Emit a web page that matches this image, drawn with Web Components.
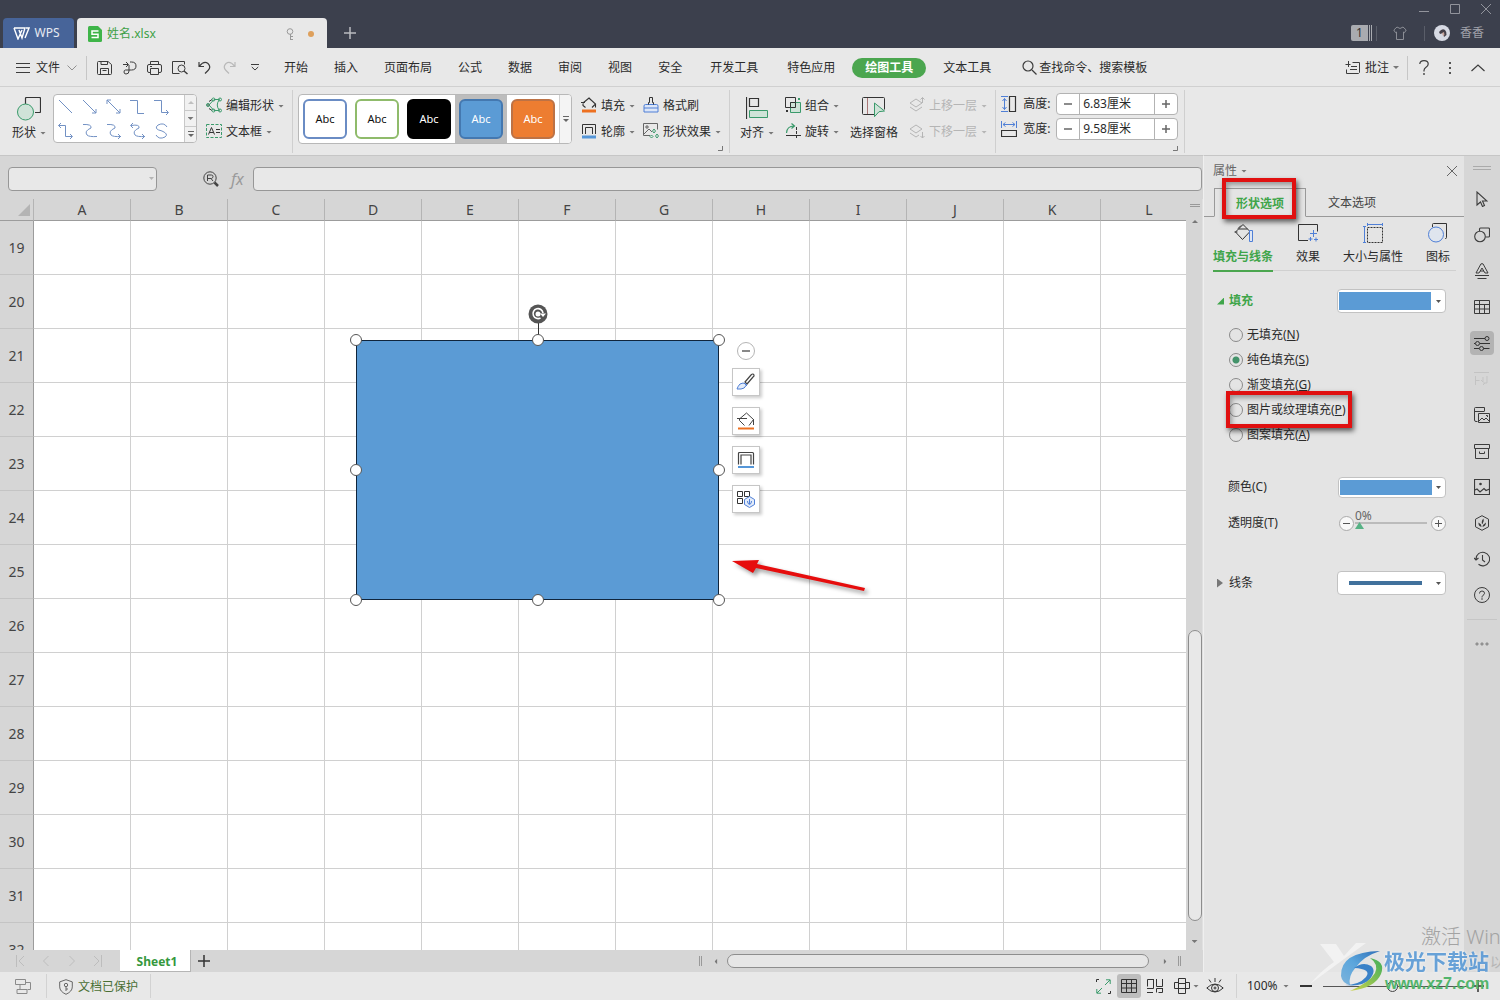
<!DOCTYPE html>
<html lang="zh-CN">
<head>
<meta charset="utf-8">
<title>姓名.xlsx - WPS</title>
<style>
html,body{margin:0;height:100%}
body{font:12px/16px "Noto Sans","Noto Sans CJK SC",sans-serif;color:#2b2b2b;background:#d6d6d6;overflow:hidden}
</style>
</head>
<body>
<wps-app></wps-app>
<script>
const G='#3a9a6b',B='#4f7fd6',K='#3c3c3c';
const ICONS={
 logo:[17,13,`<path d="M1 1h11l-3 10L6 3M1 1l4 11 4-9M12 11l4-10h-3" fill="none" stroke="#fff" stroke-width="1.400"/>`],
 sheet:[14,16,`<path d="M0 1.5Q0 0 1.5 0H10l4 4v10.500q0 1.500-1.500 1.500h-11Q0 16 0 14.500z" fill="#3fb549"/><path d="M10.500 5H4v3.200h6v3.300H3.500" fill="none" stroke="#fff" stroke-width="1.500"/>`],
 pin:[9,13,`<g fill="none" stroke="#999"><circle cx="4" cy="3.500" r="2.800"/><path d="M4.500 6v6M4 8.500h3M4 11.500h3"/></g>`],
 plus:[12,12,`<path d="M6 0v12M0 6h12" stroke="currentColor" stroke-width="1.500"/>`],
 win_min:[10,10,`<path d="M0 7.500h10" stroke="#92949c"/>`],
 win_max:[10,10,`<path d="M.5.5h9v9h-9z" fill="none" stroke="#92949c"/>`],
 close:[10,10,`<path d="M0 0l10 10M10 0L0 10" stroke="currentColor"/>`],
 shirt:[14,14,`<path d="M4 1L.8 4l1.700 2.700L3.500 6v7.500h7V6l1 .7L13.200 4 10 1Q7 4 4 1z" fill="none" stroke="#8b8d95"/>`],
 avatar:[16,16,`<circle cx="8" cy="8" r="8" fill="#d7dae4"/><path d="M5 7q3-4 6-2 2 2 1.500 5l-2.500 2-1-4-3 1z" fill="#45414a"/><path d="M8 8l2-1 .5 3-1.500 1z" fill="#c7a49b"/>`],
 menu:[14,10,`<path d="M0 .5h14M0 4.500h14M0 9.500h14" stroke="${K}"/>`],
 chev:[10,6,`<path d="M.5.5L5 5 9.500.5" fill="none" stroke="#909090"/>`],
 up:[14,8,`<path d="M.5 7L7 1l6.500 6" fill="none" stroke="${K}" stroke-width="1.200"/>`],
 save:[15,14,`<g fill="none" stroke="${K}"><path d="M.5 1.500q0-1 1-1h9.500l3.500 3v9q0 1-1 1h-12q-1 0-1-1z"/><path d="M4 .5v3h6.500V1M3.500 13.500v-6h8v6M5.500 9.500h4"/></g>`],
 pdf:[15,14,`<g fill="none" stroke="${K}"><path d="M1 3.500h5M4 1l2.500 2.500L4 6M8 1h1.500q4.500 0 4.500 4t-4.500 4H3.500q-1.500 0-1.500 2t2 2q3 0 3-3V4"/></g>`],
 print:[15,14,`<g fill="none" stroke="${K}"><path d="M3.500 3.500v-3h8v3M3.500 11.500H2q-1.500 0-1.500-1.500V5q0-1.500 1.500-1.500h11q1.500 0 1.500 1.500v5q0 1.500-1.500 1.500h-1.500M3.500 7.500h8v6h-8zM3 5.500h2"/></g>`],
 preview:[16,14,`<g fill="none" stroke="${K}"><path d="M12.500 3.500v-3H.5v12h7"/><circle cx="9.500" cy="7.500" r="3.500"/><path d="M12 10l3.500 3" stroke-width="1.500"/></g>`],
 undo:[13,13,`<path d="M1 1v4.500h5M1.500 5Q6-.5 10 2.500q3.500 3.500 0 7L7 12.500" fill="none" stroke="${K}" stroke-width="1.200"/>`],
 redo:[13,13,`<path d="M12 1v4.500H7M11.500 5Q7-.5 3 2.500q-3.500 3.500 0 7L6 12.500" fill="none" stroke="#b9b9b9" stroke-width="1.200"/>`],
 more:[8,7,`<path d="M0 .5h8M.8 3L4 6l3.200-3" fill="none" stroke="${K}"/>`],
 more2:[6,7,`<path d="M0 .5h6" stroke="#666"/><path d="M0 3h6L3 6z" fill="#666"/>`],
 search:[15,15,`<g fill="none" stroke="${K}" stroke-width="1.200"><circle cx="6" cy="6" r="5"/><path d="M10 10l4.500 4.500"/></g>`],
 note:[16,14,`<g fill="none" stroke="${K}"><path d="M3.500 0v6M.5 3.500h5M7.500 1.500h7v10l-1 1h-12v-4M5 8.500h7M6 5.500h6"/></g>`],
 help:[10,15,`<path d="M.8 4Q1 .6 5 .6 9.200.6 9.200 4q0 2-2.200 3.200-2 1.300-2 3.300v1" fill="none" stroke="${K}" stroke-width="1.200"/><circle cx="5" cy="14" r=".9" fill="${K}"/>`],
 dots:[2,12,`<path d="M0 0h2v2H0zM0 5h2v2H0zM0 10h2v2H0z" fill="#555"/>`],
 shapes:[24,24,`<path d="M8.500 7V1.500q0-1 1-1h13q1 0 1 1v13q0 1-1 1H18" fill="none" stroke="#333" stroke-width="1.200"/><circle cx="8.500" cy="15" r="8" fill="#cfe3d8" stroke="${G}"/>`],
 editshape:[16,16,`<g fill="none" stroke="${G}"><path d="M3 8L8 2.500h5.500Q9 8 13.500 13.500H8L3 8"/><path d="M1 8h3M3 4.500l3-2M3 11.500l3 2" stroke="#333"/><circle cx="2" cy="8" r="1.500"/><circle cx="7.500" cy="2.500" r="1.500"/><circle cx="14" cy="2.500" r="1.500"/><circle cx="7.500" cy="13.500" r="1.500"/><circle cx="14" cy="13.500" r="1.500"/></g>`],
 textbox:[16,14,`<path d="M.5.500h15v13h-15z" fill="none" stroke="${G}" stroke-dasharray="3 1.500"/><path d="M2.500 10.500l3-7 3 7M3.500 8.500h4M10 5.500h4M10 8.500h4" fill="none" stroke="#333"/>`],
 bucket:[16,16,`<path d="M0 5.500h4M2 6l6-5 6.500 6L11 10.500M2 6.500v2l2.500 2M14.500 6.500v4M8 1l2 2" fill="none" stroke="#333" stroke-width="1.100"/><path d="M1 12.500h14v3H1z" fill="#ed7020"/>`],
 outline:[16,16,`<path d="M1.500 11V1.500h13V11M4.500 11V4.500h7V11" fill="none" stroke="#333"/><path d="M1 12.500h14v3H1z" fill="#5596d8"/>`],
 brush:[16,16,`<path d="M1 15V9q0-1.500 1.500-1.500h11Q15 7.500 15 9v6z" fill="#dce6f7" stroke="${B}"/><path d="M1 11h14" stroke="${B}"/><path d="M5.500 7.500v-2h1v-5h3v5h1v2" fill="none" stroke="#333"/>`],
 effect:[16,16,`<path d="M7 12.500H.5V.5h14v6M1 11l5-5 3 3" fill="none" stroke="#666"/><path d="M3 3h2v2H3z" fill="none" stroke="#666"/><path d="M11 6l1.500 2L11 10 9.500 8zM14 11l1.500 2-1.500 2-1.500-2zM8.500 12l1.500 1.500L8.500 15 7 13.500z" fill="none" stroke="${G}"/>`],
 align:[22,22,`<path d="M.5 0v22M3.500 1.500h9v8h-9z" fill="none" stroke="#333" stroke-width="1.200"/><path d="M3.500 13.500h18v7h-18z" fill="#cfe3d8" stroke="${G}"/>`],
 group:[16,16,`<g fill="none"><path d="M.5.5h10v10H.5z" stroke="#333"/><path d="M5.500 5.500h10v10h-10z" fill="#cfe3d8" stroke="${G}"/><path d="M5.500 5.500h5v5h-5z" stroke="#333"/><path d="M13 1h2v2h-2z" fill="${G}"/><path d="M1 13h2v2H1z" fill="#333"/></g>`],
 rotate:[16,16,`<path d="M1.500 10Q2 3 9 3M6.500.5L9.500 3 6.500 5.500" fill="none" stroke="${G}" stroke-width="1.200"/><path d="M1 12.500h15" stroke="#333"/><path d="M11.500 4v12" stroke="#333" stroke-dasharray="3 1"/>`],
 pane:[24,21,`<path d="M12 17.500H1.500q-1 0-1-1v-15q0-1 1-1h20q1 0 1 1v11" fill="none" stroke="#333"/><path d="M5.500 1v16" stroke="#a77"/><path d="M12.500 6l10 8-5.500.7-4.500 5z" fill="#cfe3d8" stroke="${G}"/>`],
 layerup:[16,16,`<path d="M7 2L1 6l6 4 6-4zM1 10l6 4 6-4M13.500 6V.5M11.500 2.500l2-2 2 2" fill="none" stroke="#b5b5b5"/>`],
 layerdn:[16,16,`<path d="M7 2L1 6l6 4 6-4zM1 10l6 4 3-2M13.500 9v6M11.500 13l2 2 2-2" fill="none" stroke="#b5b5b5"/>`],
 height:[16,16,`<path d="M8.500.5h6v15h-6z" fill="none" stroke="#333" stroke-width="1.200"/><path d="M0 .5h7M0 15.500h7M3.500 2.500v11M1.500 5l2-2.500 2 2.500M1.500 11l2 2.500 2-2.500" fill="none" stroke="${B}"/>`],
 width:[16,16,`<path d="M.5 9.500h15v6H.5z" fill="none" stroke="#333" stroke-width="1.200"/><path d="M.5 0v7M15.500 0v7M2 3.500h12M4.500 1.500l-2.500 2 2.500 2M11.500 1.500l2.500 2-2.500 2" fill="none" stroke="${B}"/>`],
 launcher:[5,5,`<path d="M4.500 0v4.500H0" fill="none" stroke="#777"/>`],
 zoomr:[16,16,`<g fill="none" stroke="#444"><circle cx="7" cy="7" r="6.200"/><path d="M4.500 10V4h4q1.500 0 1.500 1.500T8.500 7.500h-4M8 7.500l2 2.500"/><path d="M11.500 11.500l3.500 3.500" stroke-width="2.500"/></g>`],
 corner:[12,12,`<path d="M12 0v12H0z" fill="#b4b4b4"/>`],
 p_fill:[20,20,`<path d="M1.500 9h3M2.500 9L10 1.500l7 7-7.500 8L2.500 9M5.500 6l9 0M8 2.500L5 5.500" fill="none" stroke="#333"/><path d="M16.500 7.500h3v11h-3z" fill="#dfe6f3" stroke="${B}"/>`],
 p_fx:[20,20,`<path d="M10 17.500H.5v-16h19v7" fill="none" stroke="#333"/><path d="M15.500 7v7M12 10.500h7M12.500 14v4M10.500 16h4M18 14.500v4M16 16.500h4" stroke="${B}"/>`],
 p_size:[20,20,`<path d="M4.500 4.500h15v15h-15z" fill="none" stroke="#333" stroke-dasharray="2 1"/><path d="M1.500 4v15.500M0 3.500h3M0 19.500h3M4 1.500h15.500M4.500 0v3M19.500 0v3" stroke="${B}"/>`],
 p_icon:[20,20,`<path d="M4.500 4V1.500q0-1 1-1h13v14q0 1-1 1H17" fill="none" stroke="#333"/><circle cx="8" cy="11.500" r="7.500" fill="#dfe5ee" stroke="${B}"/>`],
 s_grip:[18,4,`<path d="M0 .5h18M0 3.500h18" stroke="#aaa"/>`],
 s_cursor:[12,16,`<path d="M1 1v13l3.500-3 2 4.500 2-1L6.500 10H11z" fill="none" stroke="${K}" stroke-width="1.100"/>`],
 s_shape:[16,16,`<g fill="none" stroke="${K}" stroke-width="1.100"><circle cx="6" cy="9.500" r="5.300"/><path d="M5.500 4V2q0-1 1-1h8q1 0 1 1v7q0 1-1 1h-3"/></g>`],
 s_art:[16,16,`<g fill="none" stroke="${K}"><path d="M2 10L7 .8h2L14 10h-3l-3-5-3 5zM6 8h4M1 12.500h14M3.500 15.500h9"/></g>`],
 s_table:[16,14,`<path d="M.5.5h15v13H.5zM.5 4.500h15M.5 9h15M5.500.5v13M10.500 4.500v9" fill="none" stroke="${K}"/>`],
 s_prop:[16,15,`<g fill="none" stroke="#333"><path d="M0 2.500h11M0 7.500h1M6 7.500h10M0 12.500h5M9.500 12.500h6"/><circle cx="13" cy="2.500" r="2"/><circle cx="3.500" cy="7.500" r="2"/><circle cx="7.500" cy="12.500" r="2"/></g>`],
 s_off:[16,16,`<path d="M0 1.500h15M1.500 5v9M1.500 9.500h4M7 9l2 2V6M9 14l2-2M13 5v7h-4" fill="none" stroke="#c3c3c3"/>`],
 s_pics:[16,16,`<path d="M3.500 14.500H2q-1.500 0-1.500-1.500V1.500q0-1 1-1h9v3.500M.5 4.500h10M4.500 6.500h11v9h-11zM5 14l3-3 2 2 2-2 3 3M12 8.500h1.500V10" fill="none" stroke="${K}"/>`],
 s_box:[16,15,`<path d="M.5.5h15v4H.5zM1.500 4.500v10h13v-10M5.500 7.500v2h5v-2" fill="none" stroke="${K}"/>`],
 s_img:[16,16,`<path d="M.5.5h15v15H.5zM1 11l2-1 3 3 4-3.500 2 2 3.500-1.500" fill="none" stroke="${K}" stroke-width="1.200"/><circle cx="6.500" cy="5" r="1.300" fill="${K}"/>`],
 s_hex:[16,16,`<path d="M8 .7l6.500 3.500v7.600L8 15.300 1.500 11.800V4.200z" fill="none" stroke="${K}"/><path d="M7.500 12Q4 11 4.500 7.500l2.500 2zM8 9Q7 6 9.500 3.500 10.500 6 8.500 9zM8.500 12l.5-2 3-2.500Q12 11 8.500 12z" fill="${K}"/>`],
 s_hist:[16,16,`<path d="M2 8a6.800 6.800 0 1 1 2.500 5.300M0 7l2 2 2.500-2M8.500 4v5l2.500 2" fill="none" stroke="${K}" stroke-width="1.100"/>`],
 s_help:[16,16,`<circle cx="8" cy="8" r="7.500" fill="none" stroke="${K}"/><path d="M5.500 6.500Q5.500 4 8 4t2.500 2.300Q10.500 7.500 9 8.300 8 9 8 10.500" fill="none" stroke="${K}"/><circle cx="8" cy="12" r=".8" fill="${K}"/>`],
 s_more:[14,4,`<g fill="none" stroke="#777"><circle cx="2" cy="2" r="1.100"/><circle cx="7" cy="2" r="1.100"/><circle cx="12" cy="2" r="1.100"/></g>`],
 rot:[20,20,`<circle cx="10" cy="10" r="9.500" fill="#555"/><path d="M12.500 14a5 5 0 1 1 2.500-5" fill="none" stroke="#fff" stroke-width="1.600"/><circle cx="10" cy="10" r="2.500" fill="#fff"/><path d="M12 9.500h6l-3 3.500z" fill="#fff"/>`],
 f_brush:[20,18,`<path d="M9 9l6-7q2-2 3 0 .5 1-1 2l-6 7z" fill="none" stroke="#444" stroke-width="1.200"/><path d="M1 16q1-3 3-5 3-2 6 0l.5 1q-2 4-5.500 4zM8 10l3 3" fill="#e3ecfa" stroke="${B}"/>`],
 f_bucket:[18,18,`<path d="M0 6.500h10M3 6.500L9.500 1l7 6.500-4.500 6M2.500 6.500v2l5 5M16.500 7v6" fill="none" stroke="#444"/><path d="M1 15.500h16v2H1z" fill="#ed7020"/>`],
 f_outline:[18,18,`<path d="M1.500 13.500V2.500q0-1 1-1h13q1 0 1 1v11M4 13.500V4h10v9.500" fill="none" stroke="#444" stroke-width="1.200"/><path d="M1 15h16v2H1z" fill="#5596d8"/>`],
 f_grid:[18,18,`<path d="M.5 1.500h5v5h-5zM7.500 1.500h5v5h-5zM.5 8.500h5v5h-5z" fill="none" stroke="#333"/><path d="M12.500 6.500l5 3v5l-5 3-5-3v-5z" fill="#e3ecfa" stroke="${B}"/><path d="M12.500 9v5M10.500 11q0 3 2 3.500 2-.5 2-3.500" fill="none" stroke="${B}"/>`],
 first:[8,12,`<path d="M.5 0v12M8 1L3 6l5 5" fill="none" stroke="#bdbdbd"/>`],
 prev:[6,12,`<path d="M5.500 1l-5 5 5 5" fill="none" stroke="#bdbdbd"/>`],
 next:[6,12,`<path d="M.5 1l5 5-5 5" fill="none" stroke="#bdbdbd"/>`],
 last:[8,12,`<path d="M7.500 0v12M0 1l5 5-5 5" fill="none" stroke="#bdbdbd"/>`],
 b_track:[16,15,`<path d="M.5.5h10v5H.5zM10.500 3.500h5v7h-3M5 5.500v5M2 10.500h10v4H2z" fill="none" stroke="#8a8a8a"/>`],
 shield:[14,16,`<path d="M7 .7l6.300 2.200v5q0 4.500-6.300 7.400Q.7 12.400.7 7.900v-5z" fill="none" stroke="#666"/><circle cx="7" cy="6" r="1.700" fill="none" stroke="#666"/><path d="M7 8v4M7 10h2" stroke="#666"/>`],
 v_full:[15,15,`<path d="M.5 3V.5H3M14.500 12v2.500H12" fill="none" stroke="#333"/><path d="M9 6l5-5M10 .8h4.200V5M6 9l-5 5M.8 10v4.200H5" fill="none" stroke="${G}"/>`],
 v_grid:[16,14,`<path d="M.5.500h15v13H.5zM.5 4.500h15M.5 9h15M5.500.5v13M10.500.5v13" fill="none" stroke="#333"/>`],
 v_page:[16,14,`<path d="M6 .5H.5v7M9.500 0v7.500H15.500V0M0 9.500h6.500V0M9.500 13.500v-4h7M0 13.500h6M15.500 9.500v4h-4" fill="none" stroke="#333"/>`],
 v_read:[16,16,`<path d="M4.500.5h7v15h-7zM4.500 4.500H.5v6h4M11.500 4.500h4v6h-4M4.500 5.500h7M4.500 10.500h7" fill="none" stroke="#333"/>`],
 eye:[18,16,`<g fill="none" stroke="#333"><path d="M.8 10Q9 2 17.200 10 9 18 .8 10z"/><circle cx="9" cy="10" r="3.500"/><circle cx="9" cy="10" r="1"/><path d="M9 0v4M3 1.500l2 3M15 1.500l-2 3"/></g>`],
 vgrip:[3,10,`<path d="M.5 0v10M2.500 0v10" stroke="#999"/>`],
 hgrip:[10,3,`<path d="M0 .5h10M0 2.500h10" stroke="#999"/>`],
 swirl:[176,58,`<defs><linearGradient id="a" x1="1" y1="0" x2="0" y2="1"><stop offset="0" stop-color="#2f6fb8"/><stop offset=".5" stop-color="#5aa5dc"/><stop offset="1" stop-color="#7db4dc"/></linearGradient><linearGradient id="b" x1="1" y1="0" x2="0" y2="1"><stop offset="0" stop-color="#3fae5c"/><stop offset="1" stop-color="#cfd34a"/></linearGradient></defs><path d="M10 2h16l8 12L46 1h10Q30 20 0 42 12 28 24 20z" fill="#f4f4f4" opacity=".85"/><path d="M70 9Q30 10 31 34q1 7 9 9-2-9 6-18 8-11 24-16z" fill="url(#a)"/><path d="M44 26q9-7 17-2 6 5-2 14-7 7-24 5 14 0 21-8 6-8-12-9z" fill="#3b82c8"/><path d="M60 16q16 3 11 16-6 14-31 17 20-9 25-18 4-9-5-15z" fill="url(#b)"/>`]
};

class Base extends HTMLElement{
  constructor(){super();this.attachShadow({mode:'open'});}
  connectedCallback(){
    this.shadowRoot.innerHTML=`<style>:host{display:block;box-sizing:border-box}*{box-sizing:border-box}
    button{font:inherit;color:inherit;background:none;border:0;padding:0;margin:0;display:flex;align-items:center;justify-content:center;white-space:nowrap}
    input,select{font:inherit;color:inherit;margin:0;min-width:0;outline:0}
    ${this.css()}</style>${this.html()}`;
  }
  css(){return''} html(){return''}
}
const define=(n,css,html)=>customElements.define(n,class extends Base{
  css(){return css} html(){return typeof html==='function'?html(this):html}
});
const ic=n=>`<ui-icon name="${n}"></ui-icon>`;

define('ui-icon',`:host{display:block;flex:none}svg{display:block}`,el=>{
  const [w,h,b]=ICONS[el.getAttribute('name')];
  return `<svg width="${w}" height="${h}" viewBox="0 0 ${w} ${h}" aria-hidden="true">${b}</svg>`;
});
define('ui-caret',`:host{width:6px;height:3px;background:#777;clip-path:polygon(0 0,100% 0,50% 100%);flex:none}`,'');

define('tool-button',`
 button{gap:4px;height:16px}
 :host([tall]) button{flex-direction:column;height:44px;justify-content:space-between}
 .label{display:flex;align-items:center;gap:4px;padding-top:2px}
 :host([tall]) .label{padding-top:0}
 :host([off]){color:#b5b5b5}
 :host([off]) ui-caret{background:#b5b5b5}`,el=>{
  const c=el.hasAttribute('caret')?'<ui-caret></ui-caret>':'';
  return `<button ${el.hasAttribute('off')?'disabled style="color:inherit"':''}>${ic(el.getAttribute('icon'))}<span class="label"><slot></slot>${c}</span></button>`;
});

define('num-stepper',`
 :host{display:flex;align-items:center;gap:6px;height:22px}
 label{width:27px;white-space:nowrap}
 .box{display:flex;width:122px;height:22px;border:1px solid #b3b3b3;border-radius:4px;background:#fff;overflow:hidden}
 button{width:22px}
 button svg{display:block}
 input{flex:1;border:0;border-left:1px solid #b3b3b3;border-right:1px solid #b3b3b3;padding:0 3px;background:#fff}`,
 el=>`${ic(el.getAttribute('icon'))}<label for="v">${el.getAttribute('label')}</label><div class="box"><button aria-label="减小"><svg width="8" height="8"><path d="M0 4h8" stroke="#666" stroke-width="1.500"/></svg></button><input id="v" value="${el.getAttribute('value')}"><button aria-label="增大"><svg width="8" height="8"><path d="M0 4h8M4 0v8" stroke="#666" stroke-width="1.500"/></svg></button></div>`);

define('title-bar',`
 :host{display:flex;height:48px;background:#3c404d;color:#fff;padding-left:3px;align-items:flex-end;justify-content:space-between}
 .tabs{display:flex;gap:3px;align-items:flex-end}
 .home{width:71px;height:30px;background:#476499;border-radius:4px 4px 0 0;gap:4px;color:#e8ebf2;padding-right:4px}
 .doc{width:250px;height:30px;background:#e8e8e8;border-radius:4px 4px 0 0;color:#3ea046;gap:5px;padding:2px 13px 0 11px}
 .doc span{flex:1;text-align:left}.dot{width:6px;height:6px;border-radius:3px;background:#dea05c;margin-left:8px}
 .add{width:40px;height:30px;color:#b9bbc0}
 .right{display:flex;flex-direction:column;height:48px;padding:4px 9px 0 0;align-items:flex-end;gap:10px}
 .win{display:flex;gap:21px;color:#92949c}
 .user{display:flex;align-items:center;height:18px;color:#a0a2aa;padding-right:7px}
 .num{width:25px;height:16px;background:linear-gradient(90deg,#a9abb0 17px,#3c404d 17px 18px,#a9abb0 18px 19px,#3c404d 19px 20px,#a9abb0 20px 21px,#3c404d 21px);color:#333;justify-content:flex-start;padding-left:5px;border-radius:2px}
 i{width:1px;height:15px;background:#5a5e69}
 .shirt{width:47px}.me{gap:10px;margin-left:9px}`,
 `<div class="tabs"><button class="home">${ic('logo')}WPS</button><button class="doc">${ic('sheet')}<span>姓名.xlsx</span>${ic('pin')}<b class="dot"></b></button><button class="add" aria-label="新建">${ic('plus')}</button></div>
 <div class="right"><div class="win"><button aria-label="最小化">${ic('win_min')}</button><button aria-label="最大化">${ic('win_max')}</button><button aria-label="关闭">${ic('close')}</button></div>
 <div class="user"><button class="num">1</button><i></i><button class="shirt" aria-label="皮肤">${ic('shirt')}</button><i></i><button class="me">${ic('avatar')}香香</button></div></div>`);

define('menu-bar',`
 :host{display:flex;align-items:center;height:39px;background:#e8e8e8;border-bottom:1px solid #d0d0d0;padding:1px 15px 0 16px}
 .file{gap:6px}.file ui-icon:last-child{margin-left:1px}
 i{width:1px;height:24px;background:#c6c6c6;flex:none}
 .file+i{margin:0 5px 0 9px}
 .quick{display:flex}.quick button{width:25px;height:24px}
 nav{display:flex}.main{gap:26px;margin:0 15px 0 17px}
 .main button{padding-top:1px}
 .tools{gap:3px}.tools button{padding:1px 13px 0;height:20px}
 .tools .on{background:#4ba64f;color:#fff;font-weight:700;border-radius:10px;margin:0 1px}
 .search{margin-left:18px;gap:2px}
 .end{margin-left:auto;display:flex;align-items:center;gap:20px}
 .note{gap:4px}.end i{margin:0 -9px 0 -12px}`,
 `<button class="file">${ic('menu')}文件${ic('chev')}</button><i></i>
 <div class="quick">${['save','pdf','print','preview','undo','redo','more'].map(n=>`<button aria-label="${n}">${ic(n)}</button>`).join('')}</div>
 <nav class="main">${['开始','插入','页面布局','公式','数据','审阅','视图','安全'].map(t=>`<button>${t}</button>`).join('')}</nav>
 <nav class="tools"><button>开发工具</button><button>特色应用</button><button class="on">绘图工具</button><button>文本工具</button></nav>
 <button class="search">${ic('search')}查找命令、搜索模板</button>
 <div class="end"><button class="note">${ic('note')}批注<ui-caret></ui-caret></button><i></i><button aria-label="帮助">${ic('help')}</button><button aria-label="更多">${ic('dots')}</button><button aria-label="收起">${ic('up')}</button></div>`);

define('line-gallery',`
 :host{display:flex;width:144px;height:49px;border:1px solid #b8b8b8;border-radius:4px;background:#fff;overflow:hidden}
 .cells{flex:1;display:grid;grid-template-columns:repeat(5,24px);grid-auto-rows:24px}
 svg{display:block}
 .arrows{width:12px;display:flex;flex-direction:column;background:#f1f1f1;border-left:1px solid #c8c8c8}
 .arrows button{flex:1;border-bottom:1px solid #c8c8c8}.arrows button:last-child{border:0}
 .u{transform:rotate(180deg);opacity:.4}`,
 ()=>{
  const p=['M1 1l13 13','M1 1l13 13M14 10v4h-4','M1 1l13 13M14 10v4h-4M1 5V1h4','M0 1.500h7.500v13H14','M0 1.500h7.500v12H14M12 11l2.500 2.500L12 16',
  'M3 0L.5 2.500 3 5M.5 2.500h7v11H14M12 11l2.500 2.500L12 16','M1 1.500Q10 1 9 5 2 8 5 12q2 2 10 1.500','M1 1.500Q10 1 9 5 2 8 5 12q2 2 10 1.500M12 11l2.500 2.500L12 16','M1 2.500Q10 1 9 5 2 8 5 12q2 2 10 1.500M12 11l2.500 2.500L12 16M3 0L.5 2.500 3 5','M13 4Q10-1 4 2-1 6 8 8q7 3 3 6-6 3-9-2'];
  return `<div class="cells">${p.map((d,i)=>`<button aria-label="线条 ${i+1}"><svg width="16" height="17"><path d="${d}" fill="none" stroke="#7291c4"/></svg></button>`).join('')}</div><div class="arrows"><button aria-label="上"><ui-caret class="u"></ui-caret></button><button aria-label="下"><ui-caret></ui-caret></button><button aria-label="展开">${ic('more2')}</button></div>`});

define('style-gallery',`
 :host{display:flex;width:274px;height:50px;border:1px solid #b8b8b8;border-radius:4px;background:#fff;overflow:hidden;font-size:11px}
 .cell{width:52px;display:flex;align-items:center;justify-content:center}
 .cell.on{background:#bdbdbd}
 .cell button{width:44px;height:40px;border-radius:6px;border:2px solid #6a8cc4;color:#111}
 .cell .g{border-color:#8fbb6b}.cell .k{background:#000;border-color:#000;color:#fff}
 .cell .b{background:#5b9bd5;border-color:#4478b0;color:#fff}.cell .o{background:#ed7d31;border-color:#bd7245;color:#fff}
 .more{flex:1;background:#f4f4f4;border-left:1px solid #d0d0d0}`,
 `${['w','g','k','b','o'].map(c=>`<div class="cell ${c=='b'?'on':''}"><button class="${c}">Abc</button></div>`).join('')}<button class="more" aria-label="更多样式">${ic('more2')}</button>`);

define('ribbon-bar',`
 :host{display:flex;height:68px;background:#e8e8e8}
 .g{display:flex;align-items:flex-start;padding:7px 8px 0;margin:3px 0 2px;border-right:1px solid #cfcfcf;position:relative}
 line-gallery,style-gallery{margin-top:-3px}
 .col{display:flex;flex-direction:column;gap:10px;align-items:flex-start}
 .g1{padding-left:12px}.g1 line-gallery{margin-left:7px}.g1 .col{margin-left:9px}
 .g2{padding-left:5px}.g2 .col{margin-left:9px}.g2 .col+.col{margin-left:8px}
 .g3{padding-left:10px;gap:11px}
 .g4{padding:3px 6px 0 5px}.g4 .col{gap:3px}
 .l{position:absolute;right:6px;bottom:2px}`,
 `<div class="g g1"><tool-button tall caret icon="shapes">形状</tool-button><line-gallery></line-gallery><div class="col"><tool-button caret icon="editshape">编辑形状</tool-button><tool-button caret icon="textbox">文本框</tool-button></div></div>
 <div class="g g2"><style-gallery></style-gallery><div class="col"><tool-button caret icon="bucket">填充</tool-button><tool-button caret icon="outline">轮廓</tool-button></div><div class="col"><tool-button icon="brush">格式刷</tool-button><tool-button caret icon="effect">形状效果</tool-button></div><ui-icon class="l" name="launcher"></ui-icon></div>
 <div class="g g3"><tool-button tall caret icon="align">对齐</tool-button><div class="col"><tool-button caret icon="group">组合</tool-button><tool-button caret icon="rotate">旋转</tool-button></div><tool-button tall icon="pane">选择窗格</tool-button><div class="col"><tool-button off caret icon="layerup">上移一层</tool-button><tool-button off caret icon="layerdn">下移一层</tool-button></div></div>
 <div class="g g4"><div class="col"><num-stepper icon="height" label="高度:" value="6.83厘米"></num-stepper><num-stepper icon="width" label="宽度:" value="9.58厘米"></num-stepper></div><ui-icon class="l" name="launcher"></ui-icon></div>`);

define('formula-bar',`
 :host{display:flex;align-items:center;height:44px;padding:2px 1px 0 8px;border-top:1px solid #c6c6c6}
 .name{display:flex;align-items:center;width:149px;height:24px;border:1px solid #979797;border-radius:4px;background:#e8e8e8;padding-right:2px;margin-right:46px}
 .name input{flex:1;border:0;background:none}.name ui-caret{width:5px;background:#b5b5b5}
 .fx{font:italic 16px/20px "Noto Sans",sans-serif;color:#9a9a9a;margin:0 9px 0 12px}
 .f{flex:1;height:24px;border:1px solid #979797;border-radius:4px;background:#e8e8e8}`,
 `<div class="name"><input aria-label="名称框"><ui-caret></ui-caret></div><button aria-label="浏览公式">${ic('zoomr')}</button><button class="fx">fx</button><input class="f" aria-label="编辑栏">`);

define('shape-object',`
 :host{position:absolute;width:363px;height:260px;background:#5b9bd5;box-shadow:inset 0 0 0 1px #10253c}
 .h{position:absolute;width:12px;height:12px;border:1px solid #555;border-radius:6px;background:#fff;transform:translate(-50%,-50%)}
 .stem{position:absolute;left:50%;top:-18px;width:1px;height:18px;background:#333}
 .rot{position:absolute;left:50%;top:-36px;margin-left:-10px}`,
 `<span class="stem"></span><ui-icon class="rot" name="rot"></ui-icon>${[[0,0],[50,0],[100,0],[0,50],[100,50],[0,100],[50,100],[100,100]].map(([x,y])=>`<span class="h" style="left:${x}%;top:${y}%"></span>`).join('')}`);

define('float-tools',`
 :host{position:absolute;display:flex;flex-direction:column;align-items:center;gap:11px}
 button{width:28px;height:28px;border:1px solid #c6c6c6;background:#fff;box-shadow:2px 2px 3px #0003}
 .min{width:18px;height:18px;border-radius:9px;box-shadow:none;margin-bottom:-3px;border-color:#b5b5b5}
 .min::before{content:"";width:8px;height:2px;background:#888}`,
 `<button class="min" aria-label="收起"></button>${['f_brush','f_bucket','f_outline','f_grid'].map(n=>`<button aria-label="${n}">${ic(n)}</button>`).join('')}`);

define('sheet-grid',`
 :host{position:relative;flex:1;min-width:0;min-height:0;overflow:hidden;background:#fff;color:#444;font-size:14px}
 table{border-collapse:separate;border-spacing:0;table-layout:fixed;width:1198px}
 th{font-weight:400;padding:0;background:#d6d6d6}
 thead th{height:22px;border-bottom:1px solid #9c9c9c;border-right:1px solid #b4b4b4;width:97px}
 thead th:first-child{width:34px}
 thead ui-icon{margin-left:18px}
 tbody th{border-right:1px solid #9c9c9c;border-bottom:1px solid #c4c4c4}
 tbody tr{height:54px}
 td{padding:0;border-right:1px solid #d0d0d0;border-bottom:1px solid #d0d0d0}
 shape-object{left:356px;top:141px}
 float-tools{left:732px;top:143px}
 .arrow{position:absolute;left:728px;top:352px;filter:drop-shadow(3px 3px 2px #0006)}`,
 ()=>{
  const cols=[...'ABCDEFGHIJKL'];
  let rows='';for(let r=19;r<=32;r++)rows+=`<tr><th scope="row">${r}</th>${'<td></td>'.repeat(cols.length)}</tr>`;
  return `<table><thead><tr><th>${ic('corner')}</th>${cols.map(c=>`<th scope="col">${c}</th>`).join('')}</tr></thead><tbody>${rows}</tbody></table>
  <shape-object></shape-object><float-tools></float-tools>
  <svg class="arrow" width="145" height="50"><path d="M4 10l27-1-2 4 108 24-1 3L28 17l-3 5z" fill="#e60d0d"/></svg>`});

define('v-scroll',`
 :host{width:17px;display:flex;flex-direction:column;align-items:center;padding:5px 1px 7px 2px;border-right:1px solid #e0e0e0}
 .up{margin-top:13px;transform:rotate(180deg)}
 .track{flex:1;align-self:stretch;display:flex;flex-direction:column;padding:4px 0 19px;justify-content:flex-end}
 .thumb{height:42%;border:1px solid #8d8d8d;border-radius:7px;background:#e8e8e8;width:14px}`,
 `${ic('hgrip')}<ui-caret class="up"></ui-caret><div class="track"><div class="thumb"></div></div><ui-caret></ui-caret>`);

define('sheet-tabs',`
 :host{display:flex;align-items:center;height:22px;background:#d6d6d6;padding-left:7px}
 .nav{display:flex}.nav button{width:26px;height:22px}
 .tab{width:71px;height:22px;background:#fff;color:#35983d;font-weight:700;margin-left:9px;border-bottom:1px solid #b5b5b5;border-right:1px solid #b5b5b5;padding:2px 0 0 4px}
 .add{width:26px;color:#333}
 .h{margin:0 22px 0 auto;width:482px;display:flex;align-items:center}
 .l{transform:rotate(90deg);margin:0 8px 0 11px}.r{transform:rotate(-90deg);margin:0 10px 0 13px}
 .thumb{flex:1;height:14px;border:1px solid #8d8d8d;border-radius:7px;background:#e6e6e6}`,
 `<div class="nav">${['first','prev','next','last'].map(n=>`<button aria-label="${n}">${ic(n)}</button>`).join('')}</div><button class="tab">Sheet1</button><button class="add" aria-label="新建工作表">${ic('plus')}</button>
 <div class="h">${ic('vgrip')}<ui-caret class="l"></ui-caret><div class="thumb"></div><ui-caret class="r"></ui-caret>${ic('vgrip')}</div>`);

define('status-bar',`
 :host{display:flex;align-items:center;height:28px;background:#e8e8e8;padding:0 16px 0 15px}
 i{width:1px;height:24px;background:#d2d2d2}
 .a{margin-right:15px}.p{color:#4a6f35;gap:5px;margin:0 12px;padding-top:1px}
 .r{margin-left:auto;display:flex;align-items:center}
 .r button{width:26px;height:24px}
 .r .on{width:24px;margin:0 1px;background:#bdbdbd;border-radius:3px}
 .r .read{width:32px;gap:3px;padding-left:5px}.r .eye{width:30px}
 .r i{margin:0 10px 0 6px}
 .r .pct{width:42px;gap:5px;justify-content:space-between}
 .r .zm{width:12px;margin:0 11px;height:2px;background:#333}
 .r .zp{width:12px;color:#333}
 input{appearance:none;width:144px;height:14px;background:linear-gradient(#555,#555) center/100% 1px no-repeat;margin-right:5px}
 input::-webkit-slider-thumb{appearance:none;width:11px;height:11px;border:1px solid #444;border-radius:6px;background:#e8e8e8}`,
 `<button class="a" aria-label="跟踪">${ic('b_track')}</button><i></i><button class="p">${ic('shield')}文档已保护</button><i></i>
 <div class="r"><button aria-label="全屏">${ic('v_full')}</button><button class="on" aria-label="普通视图">${ic('v_grid')}</button><button aria-label="分页预览">${ic('v_page')}</button><button class="read" aria-label="阅读模式">${ic('v_read')}<ui-caret></ui-caret></button><button class="eye" aria-label="护眼模式">${ic('eye')}</button><i></i><button class="pct">100%<ui-caret></ui-caret></button><button class="zm" aria-label="缩小"></button><input type="range" min="0" max="100" value="48" aria-label="缩放"><button class="zp" aria-label="放大">${ic('plus')}</button></div>`);

define('swatch-select',`
 :host{position:relative;width:109px;height:24px}
 select{appearance:none;display:block;width:100%;height:100%;border:1px solid #c2c2c2;border-radius:4px;
  background:linear-gradient(#5b9bd5,#5b9bd5) 1px center/92px calc(100% - 4px) no-repeat,#fff}
 :host([line]) select{background:linear-gradient(#41719c,#41719c) 11px center/73px 4px no-repeat,#fff}
 ui-caret{position:absolute;right:5px;top:50%;margin-top:-1px;width:5px;background:#555}`,
 el=>`<select aria-label="${el.getAttribute('label')}"><option></option></select><ui-caret></ui-caret>`);

define('mark-box',`:host{position:absolute;border:4px solid #e01010;box-shadow:2px 3px 5px #0009,inset 2px 3px 5px #0005;pointer-events:none}`,'');

define('prop-panel',`
 :host{width:261px;background:#e4e4e4;display:flex;flex-direction:column;border-top:1px solid #c6c6c6;border-left:1px solid #efefef;padding:7px 0 0}
 .title{display:flex;justify-content:space-between;padding:0 7px 0 9px;height:16px;color:#333}.title .n{gap:4px}.title button{color:#666}
 .tabs{display:flex;height:38px;align-items:flex-end;position:relative;margin-bottom:6px}
 .tabs::before{content:"";width:10px;border-bottom:1px solid #999}
 .tabs button{height:29px;color:#444;padding-top:2px}
 .tabs .on{width:92px;border:1px solid #999;border-bottom-color:transparent;color:#3fa54a;font-weight:700}
 .tabs .off{flex:1;border-bottom:1px solid #999;justify-content:flex-start;padding-left:22px}
 .kinds{display:flex;gap:23px;padding-left:9px;margin-bottom:17px;background:linear-gradient(#d0d0d0,#d0d0d0) 10px calc(100% - 1px)/242px 1px no-repeat}
 .kinds button{flex-direction:column;gap:6px;height:49px;justify-content:flex-start;border-bottom:2px solid transparent}
 .kinds .on{color:#3fa54a;border-color:#4ba64f;font-weight:700}
 .row{display:flex;align-items:center;justify-content:space-between;padding:0 18px 0 24px;height:24px}
 .sec{padding-left:13px}
 .sec span{display:flex;align-items:center;gap:5px}
 .sec.g span{color:#3fa54a;font-weight:700}
 .tri{width:7px;height:7px;background:currentColor;clip-path:polygon(100% 0,100% 100%,0 100%)}
 .tri2{width:6px;height:9px;margin-right:1px;background:#777;clip-path:polygon(0 0,100% 50%,0 100%)}
 .radios{margin:9px 0 28px;padding-left:25px;display:flex;flex-direction:column;position:relative}
 .radios label{display:flex;align-items:center;gap:4px;height:25px}
 input[type=radio]{appearance:none;width:14px;height:14px;border:1px solid #8a8a8a;border-radius:7px}
 input[type=radio]:checked{background:radial-gradient(#43936a 3px,transparent 4px)}
 .color{margin-bottom:12px}.color swatch-select{width:108px;height:21px}
 .alpha{margin-bottom:36px}
 .sl{display:flex;align-items:center;width:107px;position:relative;gap:1px}
 .sl button{width:15px;height:15px;border:1px solid #aaa;border-radius:8px;background:#f8f8f8;flex:none;color:#555}
 .sl svg{display:block}
 .sl input{appearance:none;flex:1;height:14px;background:linear-gradient(#bbb,#bbb) center/100% 2px no-repeat;margin-right:3px}
 .sl input::-webkit-slider-thumb{appearance:none;width:9px;height:7px;background:#57b285;clip-path:polygon(50% 0,100% 100%,0 100%);margin-top:5px}
 .sl output{position:absolute;left:16px;top:-8px;color:#666}
 .m1{left:18px;top:-1px;width:74px;height:41px}.m2{left:22px;top:69px;width:126px;height:37px}`,
 `<div class="title"><button class="n">属性<ui-caret></ui-caret></button><button aria-label="关闭">${ic('close')}</button></div>
 <div class="tabs"><button class="on">形状选项</button><button class="off">文本选项</button><mark-box class="m1"></mark-box></div>
 <div class="kinds"><button class="on">${ic('p_fill')}填充与线条</button><button>${ic('p_fx')}效果</button><button>${ic('p_size')}大小与属性</button><button>${ic('p_icon')}图标</button></div>
 <div class="row sec g"><span><b class="tri"></b>填充</span><swatch-select label="填充"></swatch-select></div>
 <div class="radios">${[['无填充','N'],['纯色填充','S'],['渐变填充','G'],['图片或纹理填充','P'],['图案填充','A']].map(([t,k])=>`<label><input type="radio" name="fill" ${k=='S'?'checked':''}><span>${t}(<u>${k}</u>)</span></label>`).join('')}<mark-box class="m2"></mark-box></div>
 <div class="row color"><span>颜色(C)</span><swatch-select label="颜色(C)"></swatch-select></div>
 <div class="row alpha"><label for="al">透明度(T)</label><div class="sl"><button aria-label="减小"><svg width="7" height="7"><path d="M0 3.500h7" stroke="#555"/></svg></button><input id="al" type="range" value="0"><output>0%</output><button aria-label="增大"><svg width="7" height="7"><path d="M0 3.500h7M3.500 0v7" stroke="#555"/></svg></button></div></div>
 <div class="row sec"><span><b class="tri2"></b>线条</span><swatch-select line label="线条"></swatch-select></div>`);

define('side-rail',`
 :host{width:36px;background:#d6d6d6;border-top:1px solid #c6c6c6;display:flex;flex-direction:column;align-items:center;padding:10px 1px 0 0}
 button{width:24px;height:24px;margin-bottom:12px;border-radius:4px}
 .grip{margin-bottom:17px}
 .on{background:#b3b3b3}
 hr{width:30px;border:0;border-top:1px solid #c6c6c6;margin:0 0 12px}`,
 `<ui-icon class="grip" name="s_grip"></ui-icon>${['cursor','shape','art','table','prop','off','pics','box','img','hex','hist','help'].map(n=>`<button class="${n=='prop'?'on':''}" aria-label="${n}">${ic('s_'+n)}</button>`).join('')}<hr><button aria-label="more">${ic('s_more')}</button>`);

define('water-mark',`
 :host{position:absolute;right:0;bottom:0;width:190px;height:80px;overflow:hidden;pointer-events:none}
 .w{position:absolute;left:111px;top:5px;font-size:20px;line-height:24px;font-weight:300;color:#a3a3a3;white-space:nowrap}
 .s{position:absolute;left:180px;top:32px;font-size:14px;line-height:20px;color:#b5b5b5}
 .logo{position:absolute;left:0;top:22px}
 .n{position:absolute;left:74px;top:28px;font-size:21px;line-height:26px;font-weight:700;white-space:nowrap;color:#5a9ad6;text-shadow:0 0 3px #fff;opacity:.9}
 .u{position:absolute;left:75px;top:55px;font:700 16px/18px "Liberation Sans",sans-serif;color:#52b56c}`,
 `<span class="w">激活 Windows</span><span class="s">以</span><ui-icon class="logo" name="swirl"></ui-icon><span class="n">极光下载站</span><span class="u">www.xz7.com</span>`);

define('wps-app',`
 :host{display:flex;flex-direction:column;height:100vh;position:relative;overflow:hidden}
 .body{flex:1;display:flex;min-height:0}
 .main{flex:1;min-width:0;display:flex;flex-direction:column}
 .view{flex:1;display:flex;min-height:0}`,
 `<title-bar></title-bar><menu-bar></menu-bar><ribbon-bar></ribbon-bar>
 <div class="body"><div class="main"><formula-bar></formula-bar><div class="view"><sheet-grid></sheet-grid><v-scroll></v-scroll></div><sheet-tabs></sheet-tabs></div><prop-panel></prop-panel><side-rail></side-rail></div>
 <status-bar></status-bar><water-mark></water-mark>`);
</script>
</body>
</html>
